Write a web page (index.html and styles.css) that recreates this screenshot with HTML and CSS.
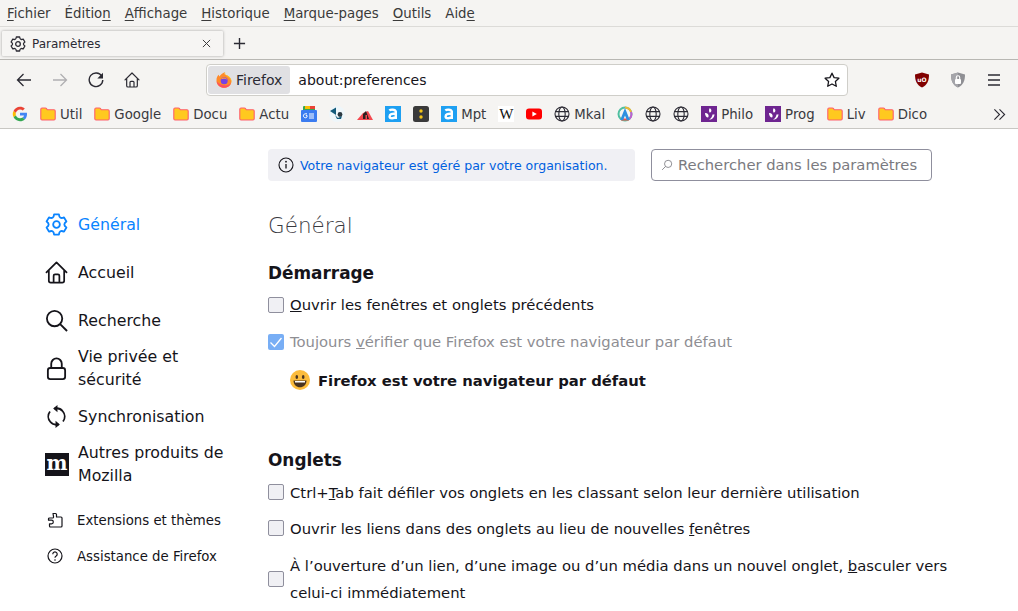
FILE: index.html
```html
<!DOCTYPE html>
<html lang="fr">
<head>
<meta charset="utf-8">
<title>Paramètres</title>
<link rel="stylesheet" href="styles.css">
</head>
<body>
<svg class="defs" width="0" height="0" aria-hidden="true">
  <defs>
    <symbol id="gear" viewBox="0 0 24 24"><path fill="none" stroke="currentColor" stroke-width="1.9" stroke-linejoin="round" d="M9.500 1.500L14.500 1.500Q15 6.800 19.840 4.590L22.340 8.920Q18 12 22.340 15.080L19.840 19.410Q15 17.200 14.500 22.500L9.500 22.500Q9 17.200 4.160 19.410L1.660 15.080Q6 12 1.660 8.920L4.160 4.590Q9 6.800 9.500 1.500Z"/><circle cx="12" cy="12" r="3.500" fill="none" stroke="currentColor" stroke-width="1.900"/></symbol>
    <symbol id="home" viewBox="0 0 24 24"><path fill="none" stroke="currentColor" stroke-width="1.800" stroke-linejoin="round" stroke-linecap="round" d="M1.500 11.800 12 1.500l10.500 10.300M4 9.800V20.500a2 2 0 0 0 2 2h12a2 2 0 0 0 2-2V9.800M9 22.500V15.500a1.500 1.500 0 0 1 1.500-1.500h3a1.500 1.500 0 0 1 1.500 1.500v7"/></symbol>
    <symbol id="folder" viewBox="0 0 16 16"><path fill="#ffc91f" stroke="#ff5f6b" stroke-width="1.100" stroke-linejoin="round" d="M.8 3.200A1.200 1.200 0 0 1 2 2h3.300c.6 0 1 .3 1.300.7l.7 1h6.700a1.200 1.200 0 0 1 1.200 1.200v7.900a1.200 1.200 0 0 1-1.200 1.200H2a1.200 1.200 0 0 1-1.200-1.200z"/></symbol>
    <symbol id="globe" viewBox="0 0 16 16"><g fill="none" stroke="#2b2a33" stroke-width="1.100"><circle cx="8" cy="8" r="7"/><ellipse cx="8" cy="8" rx="3.200" ry="7"/><path d="M1 5.600h14M1 10.400h14"/></g></symbol>
    <symbol id="philo" viewBox="0 0 16 16"><rect width="16" height="16" fill="#6e2590"/><path fill="#fff" d="M8.600 2.200c1.700.5 2.200 2 1.500 3.500-.3.500-.8.800-1.300 1C7.800 5.500 7.800 3.600 8.600 2.200zM4 7.200c1.800-.4 3.300.7 3.600 2.300.1.800-.1 1.500-.5 2.100C5.300 11.300 4 9.400 4 7.200zM13.400 8.200c.3 3-2.300 5.400-5.400 5.300 2-.9 3.300-2.900 3.500-5 .7 0 1.300-.1 1.900-.3z"/></symbol>
    <symbol id="letter-a" viewBox="0 0 16 16"><rect width="16" height="16" fill="#1ea0f2"/><path fill="none" stroke="#fff" stroke-width="2.400" d="M4.300 4.400c1-.8 5.900-1.500 6.500 1.200v7.400M11 8c-4-.7-6.400.1-6.400 2.400 0 2.300 4.300 2.400 6.400.3"/></symbol>
  </defs>
</svg>

<header class="chrome">
  <nav class="menubar">
    <span class="menu"><u>F</u>ichier</span>
    <span class="menu">Éditio<u>n</u></span>
    <span class="menu"><u>A</u>ffichage</span>
    <span class="menu"><u>H</u>istorique</span>
    <span class="menu"><u>M</u>arque-pages</span>
    <span class="menu"><u>O</u>utils</span>
    <span class="menu">Aid<u>e</u></span>
  </nav>

  <div class="tabbar">
    <div class="tab">
      <svg class="tab-icon"><use href="#gear"/></svg>
      <span class="tab-title">Paramètres</span>
      <svg class="tab-close" viewBox="0 0 10 10"><path d="M1 1l8 8M9 1l-8 8" stroke="currentColor" stroke-width="1.100" fill="none"/></svg>
    </div>
    <svg class="tab-new" viewBox="0 0 14 14"><path d="M7 1v12M1 7h12" stroke="currentColor" stroke-width="1.500" fill="none"/></svg>
  </div>

  <div class="navbar">
    <div class="nav-buttons">
      <svg class="nav-icon" viewBox="0 0 16 16"><path d="M15 8H1.500M7.500 2 1.500 8l6 6" fill="none" stroke="currentColor" stroke-width="1.300"/></svg>
      <svg class="nav-icon nav-off" viewBox="0 0 16 16"><path d="M1 8h13.500M8.500 2l6 6-6 6" fill="none" stroke="currentColor" stroke-width="1.300"/></svg>
      <svg class="nav-icon" viewBox="0 0 16 16"><path d="M13.800 4.200A6.800 6.800 0 1 0 14.800 8" fill="none" stroke="currentColor" stroke-width="1.400"/><path d="M15 .8v5.700H9.300z" fill="currentColor"/></svg>
      <svg class="nav-icon" viewBox="0 0 24 24"><use href="#home"/></svg>
    </div>
    <div class="urlbar">
      <div class="identity">
        <svg class="fx-logo" viewBox="0 0 16 16">
          <path d="M.6 6.500C1 4.500 2 3.500 3 2.800c-.1.800 0 1.400.4 1.800C4.500 2.800 6.500 1 9 0c-.6 1.200-.6 2.100 0 2.500 3.500.8 6.400 3.500 6.400 6.700 0 3.800-3.200 6.600-7.400 6.600-4.300 0-7.500-3.200-7.500-7 0-.8 0-1.500.1-2.300z" fill="#ff8a2a"/>
          <path d="M.7 9.500c.6 3.700 3.600 6.300 7.300 6.300 3.300 0 6.100-1.900 7-4.800-1.500 1.800-4.500 2.900-7 2.300C5 12.700 2.300 11.500.7 9.500z" fill="#ff4f5e"/>
          <path d="M9 0c-.6 1.200-.6 2.100 0 2.500 3.500.8 6.400 3.500 6.400 6.700 0 .8-.1 1.200-.3 1.800C15.500 7 13 5.500 11.500 4.500 10 3.500 9 2 9 0z" fill="#ffc91f"/>
          <circle cx="8.200" cy="8.700" r="3.500" fill="#7542e5"/>
          <path d="M4.800 7.300c1.500-.7 3-.8 4.300-.5 1 .3 1.700.8 2.200 1.500-.3-1.800-1.700-2.900-3.300-2.900-1.500 0-2.700.8-3.200 1.900z" fill="#ff9a3a"/>
        </svg>
        <span>Firefox</span>
      </div>
      <span class="url">about:preferences</span>
      <svg class="star" viewBox="0 0 16 16"><path d="M8 1.200l2.100 4.400 4.800.6-3.500 3.300.9 4.800L8 12l-4.300 2.300.9-4.800L1.100 6.200l4.800-.6z" fill="none" stroke="#15141a" stroke-width="1.300" stroke-linejoin="round"/></svg>
    </div>
    <div class="nav-extras">
      <svg class="ext" viewBox="0 0 16 16"><path d="M8 .5 15 2.500c0 6-1.500 10.500-7 13-5.500-2.500-7-7-7-13z" fill="#800000"/><text x="8" y="9.500" class="ublock-text">uO</text></svg>
      <svg class="ext" viewBox="0 0 16 16"><path d="M8 .5 15 2.500c0 6-1.500 10.500-7 13-5.500-2.500-7-7-7-13z" fill="#8f8f94"/><path d="M8 .5v15c-5.500-2.500-7-7-7-13z" fill="#a5a5aa"/><rect x="5" y="7" width="6" height="5" rx="1" fill="#fff"/><path d="M6.300 7V5.500a1.700 1.700 0 0 1 3.400 0V7" fill="none" stroke="#fff" stroke-width="1.100"/></svg>
      <svg class="ext" viewBox="0 0 16 16"><path d="M2 3h12M2 8h12M2 13h12" stroke="#2b2a33" stroke-width="1.300" fill="none"/></svg>
    </div>
  </div>

  <div class="bookmarks">
    <svg class="bm-only bm-g" viewBox="0 0 16 16">
      <path d="M15 8.200c0-.6 0-1-.1-1.500H8v2.900h4c-.2.900-.7 1.700-1.500 2.200l2.300 1.800c1.400-1.300 2.200-3.200 2.200-5.400z" fill="#4285f4"/>
      <path d="M8 15.200c2 0 3.600-.7 4.800-1.800l-2.300-1.800c-.6.400-1.500.7-2.500.7-1.900 0-3.500-1.300-4.100-3L1.500 11.100c1.200 2.400 3.700 4.100 6.500 4.100z" fill="#34a853"/>
      <path d="M3.900 9.300c-.3-.9-.3-1.800 0-2.600L1.500 4.900c-1 2-1 4.200 0 6.200z" fill="#fbbc05"/>
      <path d="M8 3.500c1.100 0 2 .4 2.800 1.100l2-2.100C11.500 1.300 9.900.7 8 .7 5.200.7 2.700 2.400 1.500 4.900l2.400 1.800c.6-1.800 2.200-3.200 4.100-3.200z" fill="#ea4335"/>
    </svg>
    <span class="bm"><svg class="bm-icon"><use href="#folder"/></svg>Util</span>
    <span class="bm"><svg class="bm-icon"><use href="#folder"/></svg>Google</span>
    <span class="bm"><svg class="bm-icon"><use href="#folder"/></svg>Docu</span>
    <span class="bm"><svg class="bm-icon"><use href="#folder"/></svg>Actu</span>
    <svg class="bm-only" viewBox="0 0 16 16">
      <rect x="2" y="0" width="12" height="6" rx="1" fill="#34a853"/><rect x="4" y="0" width="8" height="3" fill="#fbbc05"/><rect x="9" y="0" width="5" height="3" fill="#ea4335"/>
      <rect y="4" width="16" height="12" rx="1" fill="#3b7cf0"/>
      <path d="M6 7.800H4.200A2 2 0 1 0 6 11v-1.600H4.800M8 8h5M8 10h5M8 12h5" fill="none" stroke="#fff" stroke-width="1"/>
    </svg>
    <svg class="bm-only" viewBox="0 0 16 16">
      <circle cx="8" cy="8" r="8" fill="#eef6fa"/>
      <path d="M1 5 7 1.500V9z" fill="#135a7a"/>
      <circle cx="11" cy="8.500" r="2.400" fill="#2b3a42"/><path d="M6 9l3 3 4-2-1 3H8z" fill="#135a7a"/>
    </svg>
    <svg class="bm-only" viewBox="0 0 16 16">
      <path d="M0 14 6 7l5-2 5 9z" fill="#f4484f"/><path d="M6 13V8l3-3 3 8H10V9H8.500v4z" fill="#2a2020"/>
    </svg>
    <svg class="bm-only"><use href="#letter-a"/></svg>
    <svg class="bm-only" viewBox="0 0 16 16"><rect width="16" height="16" rx="2.500" fill="#3a3a3a"/><circle cx="8" cy="5" r="1.700" fill="#f5c518"/><circle cx="8" cy="11" r="1.700" fill="#f5c518"/></svg>
    <span class="bm"><svg class="bm-icon"><use href="#letter-a"/></svg>Mpt</span>
    <span class="bm-only bm-wiki">W</span>
    <svg class="bm-only" viewBox="0 0 16 16"><rect y="2.500" width="16" height="11" rx="3" fill="#f00"/><path d="M6.400 5.500v5L10.800 8z" fill="#fff"/></svg>
    <span class="bm"><svg class="bm-icon"><use href="#globe"/></svg>Mkal</span>
    <svg class="bm-only" viewBox="0 0 16 16">
      <circle cx="8" cy="8" r="6.500" fill="none" stroke="#4fbfa0" stroke-width="2"/>
      <path d="M8 1.500A6.500 6.500 0 0 1 14 6" fill="none" stroke="#f2b632" stroke-width="2"/>
      <path d="M14 6a6.500 6.500 0 0 1-1.500 6.800" fill="none" stroke="#c05fd0" stroke-width="2"/>
      <path d="M12 13.500H4" stroke="#f0524f" stroke-width="2"/>
      <path d="M8 2 3.200 14h3L8 9.500 9.800 14h3z" fill="#2e8fe0"/>
    </svg>
    <svg class="bm-only"><use href="#globe"/></svg>
    <svg class="bm-only"><use href="#globe"/></svg>
    <span class="bm"><svg class="bm-icon"><use href="#philo"/></svg>Philo</span>
    <span class="bm"><svg class="bm-icon"><use href="#philo"/></svg>Prog</span>
    <span class="bm"><svg class="bm-icon"><use href="#folder"/></svg>Liv</span>
    <span class="bm"><svg class="bm-icon"><use href="#folder"/></svg>Dico</span>
    <svg class="bm-more" viewBox="0 0 14 14"><path d="M1.500 1.500 7 7l-5.500 5.500M7 1.500 12.500 7 7 12.500" fill="none" stroke="#2b2a33" stroke-width="1.200"/></svg>
  </div>
</header>

<div class="page">
  <aside class="sidebar">
    <a class="cat cat-active"><svg class="cat-icon"><use href="#gear"/></svg><span>Général</span></a>
    <a class="cat"><svg class="cat-icon"><use href="#home"/></svg><span>Accueil</span></a>
    <a class="cat"><svg class="cat-icon" viewBox="0 0 24 24"><circle cx="10" cy="10" r="8" fill="none" stroke="currentColor" stroke-width="1.900"/><path d="M15.800 15.800 23 23" stroke="currentColor" stroke-width="2" fill="none"/></svg><span>Recherche</span></a>
    <a class="cat"><svg class="cat-icon" viewBox="0 0 24 24"><rect x="3" y="11.500" width="18" height="11.500" rx="2.500" fill="none" stroke="currentColor" stroke-width="1.900"/><path d="M6.500 11.500V7a5.500 5.500 0 0 1 11 0v4.500" fill="none" stroke="currentColor" stroke-width="1.900"/></svg><span>Vie privée et<br>sécurité</span></a>
    <a class="cat"><svg class="cat-icon" viewBox="0 0 24 24"><path d="M18.500 6.500A8.500 8.500 0 0 0 10 3.700M5.500 17.500A8.500 8.500 0 0 0 14 20.300M18.800 17.200A8.500 8.500 0 0 0 18.500 6.500M5.200 6.800A8.500 8.500 0 0 0 5.500 17.500" fill="none" stroke="currentColor" stroke-width="1.900"/><path d="M13 0v7.500L8.500 3.700zM11 24v-7.500l4.500 3.800z" fill="currentColor"/></svg><span>Synchronisation</span></a>
    <a class="cat"><svg class="cat-icon cat-moz" viewBox="0 0 24 23"><rect width="24" height="23" fill="#15141a"/><text x="12" y="17" class="moz-m" textLength="21" lengthAdjust="spacingAndGlyphs">m</text></svg><span>Autres produits de<br>Mozilla</span></a>
    <div class="sidebar-foot">
      <a class="sub"><svg class="sub-icon" viewBox="0 0 16 16"><path d="M6 1.500h2.500a1 1 0 0 1 1 1V5H14a1 1 0 0 1 1 1v8a1 1 0 0 1-1 1H3.500a1 1 0 0 1-1-1v-2.200h2a1.800 1.800 0 0 0 0-3.600h-3V7a1 1 0 0 1 1-1H6a1 1 0 0 0 .6-.9z" fill="none" stroke="currentColor" stroke-width="1.200" stroke-linejoin="round"/></svg><span>Extensions et thèmes</span></a>
      <a class="sub"><svg class="sub-icon" viewBox="0 0 16 16"><circle cx="8" cy="8" r="7" fill="none" stroke="currentColor" stroke-width="1.200"/><path d="M5.800 6.200a2.200 2.200 0 1 1 3.400 1.800c-.8.500-1.200 1-1.200 1.800" fill="none" stroke="currentColor" stroke-width="1.200"/><circle cx="8" cy="12" r=".8" fill="currentColor"/></svg><span>Assistance de Firefox</span></a>
    </div>
  </aside>

  <main class="content">
    <div class="topbar">
      <div class="policy">
        <svg class="policy-icon" viewBox="0 0 16 16"><circle cx="8" cy="8" r="7" fill="none" stroke="#15141a" stroke-width="1.100"/><path d="M8 7v4.500" stroke="#15141a" stroke-width="1.300"/><circle cx="8" cy="4.700" r=".9" fill="#15141a"/></svg>
        <span>Votre navigateur est géré par votre organisation.</span>
      </div>
      <div class="search">
        <svg class="search-icon" viewBox="0 0 16 16"><circle cx="9.500" cy="6.500" r="4.800" fill="none" stroke="currentColor" stroke-width="1.100"/><path d="M6 10 1.500 14.500" stroke="currentColor" stroke-width="1.100"/></svg>
        <span>Rechercher dans les paramètres</span>
      </div>
    </div>

    <h1 class="title">Général</h1>

    <h2 class="section">Démarrage</h2>
    <div class="check"><span class="box"></span><span><u>O</u>uvrir les fenêtres et onglets précédents</span></div>
    <div class="check check-off"><span class="box box-on"><svg viewBox="0 0 16 16"><path d="M2.500 8.500 6.500 12.500 13.500 4" fill="none" stroke="#fff" stroke-width="1.300"/></svg></span><span>Toujours <u>v</u>érifier que Firefox est votre navigateur par défaut</span></div>
    <div class="default-note">
      <svg class="smile" viewBox="0 0 20 20"><circle cx="10" cy="10" r="10" fill="#fcbc3c"/><ellipse cx="6.800" cy="7" rx="1.300" ry="1.900" fill="#4a3420"/><ellipse cx="13.200" cy="7" rx="1.300" ry="1.900" fill="#4a3420"/><path d="M3.500 10.500h13c0 4-3 6.800-6.500 6.800s-6.500-2.800-6.500-6.800z" fill="#4a3420"/><path d="M5 11h10v1.500H5z" fill="#fff"/></svg>
      <strong>Firefox est votre navigateur par défaut</strong>
    </div>

    <h2 class="section section-tabs">Onglets</h2>
    <div class="check check-tight"><span class="box"></span><span>Ctrl+<u>T</u>ab fait défiler vos onglets en les classant selon leur dernière utilisation</span></div>
    <div class="check check-tight"><span class="box"></span><span>Ouvrir les liens dans des onglets au lieu de nouvelles <u>f</u>enêtres</span></div>
    <div class="check check-two"><span class="box"></span><span>À l’ouverture d’un lien, d’une image ou d’un média dans un nouvel onglet, <u>b</u>asculer vers celui-ci immédiatement</span></div>
  </main>
</div>
</body>
</html>
```

FILE: styles.css
```css
* { box-sizing: border-box; }
html, body { margin: 0; height: 100%; overflow: hidden; }
body { font-family: "DejaVu Sans", sans-serif; color: #15141a; background: #fff; }
.defs { position: absolute; }

.chrome { background: #f5f4f2; color: #2b2a33; }

.menubar { display: flex; height: 27px; align-items: center; padding: 0 0 0 7px; gap: 14px; font-size: 13.33px; color: #3a3a3a; border-bottom: 1px solid #dcdbd8; }
.menu u { text-underline-offset: 2px; }

.tabbar { display: flex; align-items: center; height: 33px; padding: 0 0 0 2px; border-bottom: 1px solid #b8b7b3; }
.tab { display: flex; align-items: center; width: 221px; height: 25px; padding: 1px 8px 0; background: #f6f5f3; border-radius: 1px; box-shadow: 0 0 3px rgba(0,0,0,.35); font-size: 12px; }
.tab-icon { width: 16px; height: 16px; flex: none; }
.tab-title { margin-left: 6px; flex: 1; }
.tab-close { width: 9px; height: 9px; color: #3a3a3a; margin-right: 4px; }
.tab-new { width: 13px; height: 13px; margin-left: 10px; margin-top: 1px; }

.navbar { display: flex; align-items: center; height: 40px; padding: 0 16px; }
.nav-buttons { display: flex; gap: 20px; width: 190px; align-items: center; }
.nav-icon { width: 16px; height: 16px; flex: none; }
.nav-off { color: #b0afb2; }
.urlbar { display: flex; align-items: center; width: 642px; height: 32px; background: #fff; border: 1px solid #cfcec9; border-radius: 4px; font-size: 14px; padding: 1px; }
.identity { display: flex; align-items: center; gap: 4px; height: 28px; padding: 0 8px; background: #e0e0e3; border-radius: 3px; color: #2b2a33; }
.fx-logo { width: 16px; height: 16px; }
.url { flex: 1; margin-left: 8px; color: #15141a; }
.star { width: 16px; height: 16px; margin-right: 6px; }
.nav-extras { display: flex; align-items: center; gap: 20px; margin-left: 66px; }
.ext { width: 16px; height: 16px; flex: none; }
.ublock-text { font-size: 6px; font-weight: 700; fill: #fff; text-anchor: middle; }

.bookmarks { display: flex; align-items: center; height: 29px; padding: 0 5px 0 12px; font-size: 13.3px; color: #3a3a40; border-bottom: 1px solid #c8c7c3; }
.bm { display: flex; align-items: center; gap: 4px; margin-right: 12px; }
.bm-icon { width: 16px; height: 16px; flex: none; }
.bm-only { width: 16px; height: 16px; flex: none; margin-right: 12px; }
.bm-wiki { font-family: "Liberation Serif", serif; font-size: 15px; text-align: center; line-height: 16px; color: #111; background: #fff; }
.bm-more { width: 13px; height: 13px; margin-left: auto; margin-right: 7px; }

.page { display: flex; }
.sidebar { width: 268px; padding: 71px 0 0 45px; flex: none; }
.cat { display: flex; align-items: center; gap: 10px; height: 48px; font-size: 15.8px; line-height: 23px; color: #15141a; }
.cat-icon { width: 23px; height: 23px; flex: none; }
.cat-moz { width: 24px; margin-right: -1px; }
.cat-active { color: #0a84ff; }
.sidebar-foot { margin-top: 14px; }
.sub { display: flex; align-items: center; gap: 14px; height: 36px; padding-left: 2px; font-size: 13.3px; }
.sub-icon { width: 16px; height: 16px; flex: none; }
.moz-m { font-family: "DejaVu Serif", serif; font-weight: 700; font-size: 20px; fill: #fff; text-anchor: middle; }

.content { flex: 1; }
.topbar { display: flex; align-items: center; gap: 16px; padding-top: 20px; }
.policy { display: flex; align-items: center; gap: 6px; width: 367px; height: 32px; padding: 0 10px; background: #f0f0f4; border-radius: 4px; font-size: 12.55px; color: #0060df; }
.policy-icon { width: 16px; height: 16px; flex: none; }
.search { display: flex; align-items: center; gap: 5px; width: 281px; height: 32px; padding: 0 9px 1px; border: 1px solid #8f8f9d; border-radius: 4px; font-size: 14.75px; color: #7a7a80; }
.search-icon { width: 12px; height: 12px; flex: none; }

.title { margin: 30px 0 0; font-size: 21.5px; font-weight: 200; line-height: 30px; color: #3a3a3f; }
.section { margin: 20px 0 1px; font-size: 16.9px; font-weight: 700; line-height: 24px; }
.section-tabs { margin: 48px 0 2px; }
.check { display: flex; align-items: center; gap: 6px; min-height: 37px; font-size: 14.8px; width: 690px; line-height: 27px; }
.check-tight { min-height: 36px; }
.check-off { color: #8e8e93; }
.check-two { margin-top: 6px; }
.box { width: 16px; height: 16px; flex: none; background: #f0f0f4; border: 1px solid #8f8f9d; border-radius: 2px; }
.box-on { background: #78aef5; border: none; display: flex; }
.default-note { display: flex; align-items: center; gap: 8px; margin: 0 0 0 22px; font-size: 14.8px; height: 40px; }
.smile { width: 20px; height: 20px; flex: none; }
```
